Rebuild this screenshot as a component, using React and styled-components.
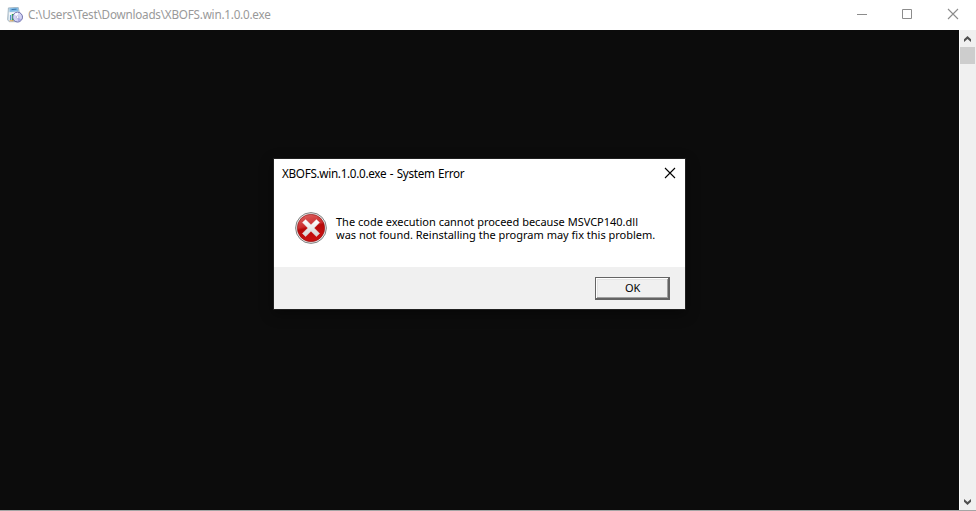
import React from "react";
import styled, { createGlobalStyle } from "styled-components";

const GlobalStyle = createGlobalStyle`
  * { box-sizing: border-box; }
  body { margin: 0; overflow: hidden; background: #0c0c0c; }
`;

const Window = styled.div`
  position: relative;
  display: flex;
  flex-direction: column;
  width: 976px;
  height: 511px;
  border-bottom: 1px solid #a5a5a5;
  background: #0c0c0c;
  font-family: "Noto Sans", sans-serif;
`;

const TitleBar = styled.header`
  display: flex;
  align-items: center;
  height: 30px;
  flex: none;
  padding-left: 7px;
  background: #fff;
  color: #999;
`;

const Caption = styled.span`
  flex: ${(p) => (p.$grow ? 1 : "none")};
  padding-bottom: 2px;
  font-size: 11.7px;
  line-height: 16px;
  letter-spacing: ${(p) => p.$tracking}px;
  word-spacing: 0.8px;
  white-space: nowrap;
`;

const AppIcon = styled.svg`
  flex: none;
  margin-right: 5px;
`;

const Controls = styled.div`
  display: flex;
  height: 30px;
  color: #8c8c8c;
`;

const ControlButton = styled.button`
  display: flex;
  align-items: center;
  justify-content: center;
  width: ${(p) => p.$width || 45}px;
  height: 28px;
  padding: 0;
  border: 0;
  background: none;
  color: inherit;
`;

const Body = styled.div`
  display: flex;
  flex: 1;
  min-height: 0;
`;

const Console = styled.main`
  flex: 1;
  background: #0c0c0c;
`;

const ScrollBar = styled.div`
  display: flex;
  flex-direction: column;
  align-items: flex-start;
  width: 17px;
  background: #f0f0f0;
  border-left: 1px solid #fff;
`;

const ScrollArrow = styled.div`
  display: flex;
  align-items: center;
  justify-content: center;
  width: 15px;
  height: 17px;
  color: #505050;
`;

const ScrollThumb = styled.div`
  width: 15px;
  height: 17px;
  margin-bottom: auto;
  background: #cdcdcd;
`;

const Dialog = styled.section`
  position: absolute;
  left: 274px;
  top: 159px;
  display: flex;
  flex-direction: column;
  width: 411px;
  height: 150px;
  background: #fff;
  color: #000;
  outline: 1px solid #202020;
  box-shadow: 0 4px 12px 1px rgba(0, 0, 0, 0.4);
`;

const DialogTitle = styled.div`
  display: flex;
  align-items: flex-start;
  justify-content: space-between;
  height: 29px;
  padding-left: 8px;

  ${Caption} {
    margin-top: 6px;
  }
`;

const DialogBody = styled.div`
  display: flex;
  flex: 1;
  gap: 9px;
  padding: 24px 0 0 21px;
`;

const ErrorIcon = styled.svg`
  flex: none;
`;

const Message = styled.p`
  width: 322px;
  margin: 3px 0 0;
  font-size: 11px;
  line-height: 13px;
  letter-spacing: -0.005px;
`;

const DialogFooter = styled.footer`
  display: flex;
  justify-content: flex-end;
  height: 42px;
  padding: 10px 15px 0 0;
  background: #f0f0f0;
`;

const OkButton = styled.button`
  width: 75px;
  height: 23px;
  padding: 0 0 0 1px;
  border: 1px solid #646464;
  border-right-width: 2px;
  border-bottom-width: 2px;
  background: #f0f0f0;
  box-shadow: inset 1px 1px #fff, inset -1px -1px #a0a0a0, inset 2px 2px #e3e3e3;
  color: #000;
  font: 11px/18px "Noto Sans", sans-serif;
  letter-spacing: -0.3px;
`;

function CloseGlyph() {
  return (
    <svg width="12" height="12" viewBox="0 0 12 12">
      <path d="M1 1l10 10M11 1L1 11" stroke="currentColor" strokeWidth="1.1" fill="none" />
    </svg>
  );
}

function InstallerGlyph() {
  return (
    <AppIcon width="16" height="16" viewBox="0 0 16 16">
      <path d="M1.4.9L11.2.3l1 4.4v10H2.2L.6 12.8z" fill="#d3e0ea" stroke="#8da2b2" strokeWidth=".7" />
      <path d="M2.4 1.2l8.4-.5.6 3.6-8.6.7z" fill="#82bce6" />
      <path d="M4.5 2.6l5-.4" stroke="#3a77ae" />
      <path d="M1.8 5.6l9.8-.5v8.6l-9 .7z" fill="#f4f7fa" />
      <path d="M3.6 8v5" stroke="#5c92d7" strokeWidth="1.3" />
      <path d="M5.8 7v6.5" stroke="#26b33f" strokeWidth="2" />
      <path d="M2.6 13.8h4" stroke="#e29a48" />
      <circle cx="10.6" cy="10.1" r="4.9" fill="#d3d4f4" stroke="#6464a5" strokeWidth=".9" />
      <path d="M10.6 10.1L7.3 7.2a4.4 4.4 0 0 1 3.8-1.4z" fill="#f9f9ff" />
      <path d="M10.6 10.1l3.6 2.3a4.4 4.4 0 0 1-3.2 2z" fill="#a9abe4" />
      <circle cx="10.6" cy="10.1" r="1.3" fill="#fff" stroke="#a5a5d0" strokeWidth=".6" />
    </AppIcon>
  );
}

function ErrorGlyph() {
  return (
    <ErrorIcon width="32" height="32" viewBox="0 0 32 32">
      <defs>
        <linearGradient id="red" x1="0" y1="0" x2="0.25" y2="1">
          <stop offset="0" stopColor="#df6767" />
          <stop offset=".48" stopColor="#cc2d2d" />
          <stop offset=".56" stopColor="#b70808" />
          <stop offset="1" stopColor="#c91111" />
        </linearGradient>
        <linearGradient id="cross" x1="0" y1="0" x2="0" y2="1">
          <stop offset="0" stopColor="#fff" />
          <stop offset="1" stopColor="#d4d4d4" />
        </linearGradient>
      </defs>
      <circle cx="16" cy="16" r="15.4" fill="#e9e9e9" stroke="#777" strokeWidth=".9" />
      <circle cx="16" cy="16" r="13.7" fill="url(#red)" stroke="#8e1515" strokeWidth=".6" />
      <path
        d="M10.6 7.4L16 12.8l5.4-5.4 3.2 3.2-5.4 5.4 5.4 5.4-3.2 3.2-5.4-5.4-5.4 5.4-3.2-3.2 5.4-5.4-5.4-5.4z"
        fill="url(#cross)"
        stroke="#ead0d0"
        strokeWidth=".5"
        strokeLinejoin="round"
      />
    </ErrorIcon>
  );
}

function Chevron({ down }) {
  return (
    <svg width="7" height="6" viewBox="0 0 7 6">
      <path
        d={down ? "M0 0l3.5 3L7 0v2.8L3.5 6 0 2.8z" : "M0 6l3.5-3L7 6V3.2L3.5 0 0 3.2z"}
        fill="currentColor"
      />
    </svg>
  );
}

export default function App() {
  return (
    <>
      <GlobalStyle />
      <Window>
        <TitleBar>
          <InstallerGlyph />
          <Caption $grow $tracking={-0.23}>C:\Users\Test\Downloads\XBOFS.win.1.0.0.exe</Caption>
          <Controls>
            <ControlButton $width={44} aria-label="Minimize">
              <svg width="10" height="10"><path d="M0 5.5h10" stroke="currentColor" /></svg>
            </ControlButton>
            <ControlButton $width={46} aria-label="Maximize">
              <svg width="10" height="10"><path d="M.5.5h9v9h-9z" fill="none" stroke="currentColor" /></svg>
            </ControlButton>
            <ControlButton $width={46} aria-label="Close"><CloseGlyph /></ControlButton>
          </Controls>
        </TitleBar>
        <Body>
          <Console />
          <ScrollBar>
            <ScrollArrow><Chevron /></ScrollArrow>
            <ScrollThumb />
            <ScrollArrow><Chevron down /></ScrollArrow>
          </ScrollBar>
        </Body>
        <Dialog role="alertdialog">
          <DialogTitle>
            <Caption $tracking={-0.31}>XBOFS.win.1.0.0.exe - System Error</Caption>
            <ControlButton $width={30} aria-label="Close"><CloseGlyph /></ControlButton>
          </DialogTitle>
          <DialogBody>
            <ErrorGlyph />
            <Message>
              The code execution cannot proceed because MSVCP140.dll was not found. Reinstalling the
              program may fix this problem.
            </Message>
          </DialogBody>
          <DialogFooter><OkButton>OK</OkButton></DialogFooter>
        </Dialog>
      </Window>
    </>
  );
}
